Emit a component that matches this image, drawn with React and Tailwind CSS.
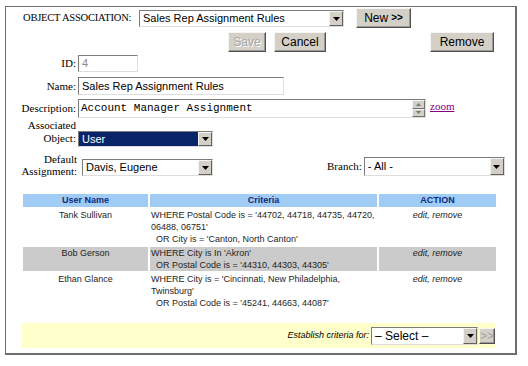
import React from "react";

const sans = "font-['Liberation_Sans',Arial,sans-serif]";
const serif = "font-['Liberation_Serif','Times_New_Roman',serif]";
const btn =
  "flex items-center justify-center bg-[#d4d0c8] border border-t-[#f6f6f6] border-l-[#f6f6f6] border-r-[#505050] border-b-[#505050] shadow-[inset_-1px_-1px_0_#9a9a9a] text-[12px] leading-none font-['Liberation_Sans',Arial,sans-serif]";
const inset =
  "border border-t-[#7c7c7c] border-l-[#7c7c7c] border-r-[#dedede] border-b-[#dedede]";

function Arrow() {
  return (
    <div className="w-[14px] h-full bg-[#d4d0c8] border border-t-[#f4f4f4] border-l-[#f4f4f4] border-r-[#606060] border-b-[#606060] flex items-center justify-center shrink-0">
      <svg width="7" height="4" viewBox="0 0 7 4">
        <path d="M0 0 H7 L3.5 4 Z" fill="#000" />
      </svg>
    </div>
  );
}

function Sel({ className, text, hl, textClass }) {
  return (
    <div className={`flex bg-white ${inset} ${className}`}>
      <div
        className={`flex-1 flex items-center pl-[3px] whitespace-nowrap ${sans} ${textClass || "text-[11px]"} ${
          hl ? "bg-[#0a246a] text-white" : "text-black"
        }`}
      >
        {text}
      </div>
      <Arrow />
    </div>
  );
}

function Label({ className, children }) {
  return (
    <div className={`${serif} text-[11px] text-black text-right ${className}`}>
      {children}
    </div>
  );
}

const rows = [
  {
    name: "Tank Sullivan",
    lines: [
      ["WHERE Postal Code is = '44702, 44718, 44735, 44720,", false],
      ["06488, 06751'", false],
      ["OR City is = 'Canton, North Canton'", true],
    ],
    gray: false,
  },
  {
    name: "Bob Gerson",
    lines: [
      ["WHERE City is In 'Akron'", false],
      ["OR Postal Code is = '44310, 44303, 44305'", true],
    ],
    gray: true,
  },
  {
    name: "Ethan Glance",
    lines: [
      ["WHERE City is = 'Cincinnati, New Philadelphia,", false],
      ["Twinsburg'", false],
      ["OR Postal Code is = '45241, 44663, 44087'", true],
    ],
    gray: false,
  },
];

export default function App() {
  return (
    <div className="w-[528px] h-[366px] bg-white pt-[6px] overflow-hidden">
      <div className="ml-[5px] w-[512px] h-[349px] border-l border-t border-r-2 border-b-2 border-[#6e6e6e] bg-white">
        {/* Row 1 */}
        <div className="flex items-start pl-[17px]">
          <div className={`${serif} text-[10.5px] leading-[13px] w-[116px] mt-[4px] text-black whitespace-nowrap tracking-[-0.2px]`}>
            OBJECT ASSOCIATION:
          </div>
          <Sel className="w-[205px] h-[17px] mt-[3px]" text="Sales Rep Assignment Rules" />
          <div className={`${btn} text-black w-[55px] h-[20px] ml-[12px] mt-[1px]`}>
            New <span className="ml-[3px] text-[10px] font-bold">&gt;&gt;</span>
          </div>
        </div>

        {/* Row 2 buttons */}
        <div className="flex mt-[4px]">
          <div className={`${btn} w-[38px] h-[20px] ml-[222px] text-[#a8a8a8] [text-shadow:1px_1px_0_#fff]`}>Save</div>
          <div className={`${btn} text-black w-[52px] h-[20px] ml-[8px]`}>Cancel</div>
          <div className={`${btn} text-black w-[64px] h-[20px] ml-[104px]`}>Remove</div>
        </div>

        {/* ID */}
        <div className="flex items-center mt-[3px]">
          <Label className="w-[70px]">ID:</Label>
          <div className={`ml-[2px] w-[60px] h-[17px] bg-white ${inset} flex items-center pl-[3px] ${sans} text-[11px] text-[#8a8a8a]`}>
            4
          </div>
        </div>

        {/* Name */}
        <div className="flex items-center mt-[5px]">
          <Label className="w-[70px]">Name:</Label>
          <div className={`ml-[2px] w-[206px] h-[18px] bg-white ${inset} flex items-center pl-[3px] ${sans} text-[11px] text-black`}>
            Sales Rep Assignment Rules
          </div>
        </div>

        {/* Description */}
        <div className="flex items-start mt-[4px]">
          <Label className="w-[70px] mt-[1px]">Description:</Label>
          <div className={`ml-[2px] w-[348px] h-[19px] bg-white ${inset} flex`}>
            <div className="flex-1 flex items-center pl-[2px] font-['Liberation_Mono','Courier_New',monospace] text-[11px] text-black">
              Account Manager Assignment
            </div>
            <div className="w-[13px] h-full flex flex-col">
              <div className="flex-1 bg-[#d4d0c8] border border-t-[#f4f4f4] border-l-[#f4f4f4] border-r-[#707070] border-b-[#707070] flex items-center justify-center">
                <svg width="5" height="3" viewBox="0 0 5 3"><path d="M0 3 H5 L2.5 0 Z" fill="#777" /></svg>
              </div>
              <div className="flex-1 bg-[#d4d0c8] border border-t-[#f4f4f4] border-l-[#f4f4f4] border-r-[#707070] border-b-[#707070] flex items-center justify-center">
                <svg width="5" height="3" viewBox="0 0 5 3"><path d="M0 0 H5 L2.5 3 Z" fill="#777" /></svg>
              </div>
            </div>
          </div>
          <div className={`${serif} text-[11px] leading-[13px] ml-[4px] mt-[1px] text-[#800080] underline`}>zoom</div>
        </div>

        {/* Associated Object */}
        <div className="flex items-start mt-[1px]">
          <Label className="w-[70px] leading-[13px]">
            Associated
            <br />
            Object:
          </Label>
          <Sel className="ml-[2px] w-[135px] h-[16px] mt-[12px]" text="User" hl />
        </div>

        {/* Default Assignment + Branch */}
        <div className="flex items-start mt-[6px]">
          <Label className="w-[71px] leading-[12px]">
            Default
            <br />
            Assignment:
          </Label>
          <Sel className="ml-[5px] w-[131px] h-[17px] mt-[6px]" text="Davis, Eugene" />
          <div className="flex items-center ml-[114px] mt-[4px] h-[19px]">
            <div className={`${serif} text-[11px] text-black`}>Branch:</div>
            <Sel className="ml-[2px] w-[141px] h-[19px]" text="- All -" />
          </div>
        </div>

        {/* Table */}
        <div className={`ml-[17px] mt-[17px] w-[473px] grid grid-cols-[125px_227px_117px] gap-[2px] ${sans} text-[9px] text-[#1e1e1e]`}>
          <div className="bg-[#9fcbf5] h-[13px] flex items-center justify-center font-bold text-[#102a7c]">User Name</div>
          <div className="bg-[#9fcbf5] h-[13px] flex items-center justify-center font-bold text-[#102a7c]">Criteria</div>
          <div className="bg-[#9fcbf5] h-[13px] flex items-center justify-center font-bold text-[#102a7c]">ACTION</div>
          {rows.map((r) => (
            <React.Fragment key={r.name}>
              <div className={`${r.gray ? "bg-[#cbcbcb]" : "bg-white"} leading-[12px] text-center`}>{r.name}</div>
              <div className={`${r.gray ? "bg-[#cbcbcb]" : "bg-white"} leading-[12px] pl-[1px]`}>
                {r.lines.map(([t, ind], i) => (
                  <div key={i} className={`whitespace-nowrap ${ind ? "pl-[5px]" : ""}`}>{t}</div>
                ))}
              </div>
              <div className={`${r.gray ? "bg-[#cbcbcb]" : "bg-white"} leading-[12px] text-center italic`}>edit, remove</div>
            </React.Fragment>
          ))}
        </div>

        {/* Footer */}
        <div className="ml-[16px] mt-[14px] w-[473px] h-[25px] bg-[#ffffcc] flex items-center justify-end">
          <div className={`${sans} text-[9px] italic text-black mr-[2px]`}>Establish criteria for:</div>
          <Sel className="w-[107px] h-[18px]" text="– Select –" textClass="text-[12px]" />
          <div className={`${btn} w-[16px] h-[16px] ml-[1px] text-[9px] text-[#a0a0a0]`}>&gt;&gt;</div>
        </div>
      </div>
    </div>
  );
}
